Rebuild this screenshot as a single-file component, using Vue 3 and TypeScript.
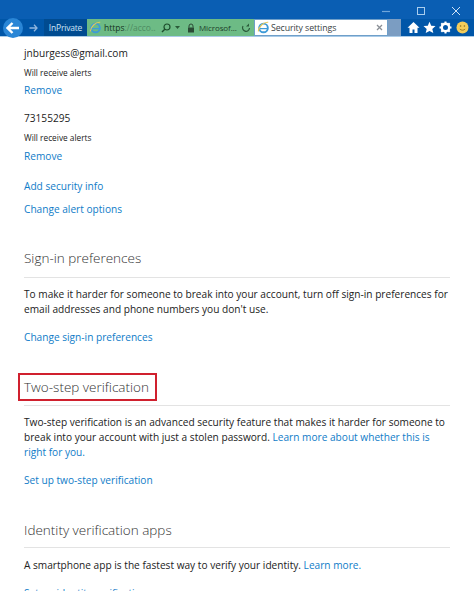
<script setup lang="ts">
</script>

<template>
  <div class="page">
    <header class="chrome">
      <div class="titlebar">
        <svg class="wc" width="10" height="10" viewBox="0 0 10 10"><path d="M1 5.5h8" stroke="#6fa6da" stroke-width="1.2" /></svg>
        <svg class="wc" width="10" height="10" viewBox="0 0 10 10"><rect x="1.5" y="1.5" width="7" height="7" fill="none" stroke="#a9cdee" stroke-width="1" /></svg>
        <svg class="wc" width="10" height="10" viewBox="0 0 10 10"><path d="M1 1l8 8M9 1l-8 8" stroke="#cfe2f5" stroke-width="1" /></svg>
      </div>
      <div class="toolbar">
        <div class="back">
          <svg width="14" height="12" viewBox="0 0 14 12"><path d="M6.5 1L1.5 6l5 5M2 6h11" fill="none" stroke="#fff" stroke-width="2.4" /></svg>
        </div>
        <svg class="fwd" width="9" height="8" viewBox="0 0 9 8"><path d="M5 .8L8 4 5 7.2M8 4H.5" fill="none" stroke="#8fb6de" stroke-width="1.3" /></svg>
        <div class="inprivate">InPrivate</div>
        <div class="address">
          <svg class="ie" width="13" height="13" viewBox="0 0 15 15"><circle cx="7.5" cy="8" r="5" fill="none" stroke="#3e9bd8" stroke-width="2.2" /><path d="M3 8.8h9" stroke="#3e9bd8" stroke-width="1.4" /><path d="M1.5 12C2 6 8 1 13 1.5" fill="none" stroke="#e3c75a" stroke-width="1.2" /></svg>
          <span class="url">https<span class="dim">://acco...</span></span>
          <svg class="mag" width="10" height="10" viewBox="0 0 10 10"><circle cx="6" cy="4" r="3" fill="none" stroke="#1d4d2c" stroke-width="1.2" /><path d="M3.8 6.2L1 9" stroke="#1d4d2c" stroke-width="1.4" /></svg>
          <svg class="caret" width="5" height="3" viewBox="0 0 5 3"><path d="M0 0h5L2.5 3z" fill="#2a5a38" /></svg>
          <svg class="lock" width="8" height="10" viewBox="0 0 8 10"><path d="M2 4.5V3a2 2 0 014 0v1.5" fill="none" stroke="#2b4a35" stroke-width="1" /><rect x="1" y="4.5" width="6" height="5" fill="#2b4a35" /></svg>
          <span class="site">Microsof...</span>
          <svg class="refresh" width="10" height="10" viewBox="0 0 10 10"><path d="M8.5 5A3.5 3.5 0 112 3" fill="none" stroke="#2b5a3a" stroke-width="1.2" /><path d="M8 0.5v3H5z" fill="#2b5a3a" /></svg>
        </div>
        <div class="tab">
          <svg class="ie" width="13" height="13" viewBox="0 0 15 15"><circle cx="7.5" cy="8" r="5" fill="none" stroke="#3e9bd8" stroke-width="2.2" /><path d="M3 8.8h9" stroke="#3e9bd8" stroke-width="1.4" /><path d="M1.5 12C2 6 8 1 13 1.5" fill="none" stroke="#e9c95a" stroke-width="1.3" /></svg>
          <span class="tabtitle">Security settings</span>
          <svg class="tabx" width="7" height="7" viewBox="0 0 7 7"><path d="M1 1l5 5M6 1L1 6" stroke="#8a8f96" stroke-width="1.3" /></svg>
        </div>
        <div class="newtab"></div>
        <div class="tools">
          <svg width="13" height="13" viewBox="0 0 13 13"><path d="M6.5 1L0.5 6.8h2V12h3V8.5h2V12h3V6.8h2z" fill="#fff" /></svg>
          <svg width="13" height="13" viewBox="0 0 13 13"><path d="M6.5 .8l1.7 3.9 4.3.4-3.2 2.8 1 4.2-3.8-2.2-3.8 2.2 1-4.2L.5 5.1l4.3-.4z" fill="#fff" /></svg>
          <svg width="13" height="13" viewBox="0 0 13 13"><circle cx="6.5" cy="6.5" r="3.7" fill="none" stroke="#fff" stroke-width="2.4" /><path d="M6.5 .5v2.4M6.5 10v2.5M.5 6.5h2.4M10 6.5h2.5M2.3 2.3L4 4M9 9l1.7 1.7M10.7 2.3L9 4M4 9l-1.7 1.7" stroke="#fff" stroke-width="2" /></svg>
          <svg width="13" height="13" viewBox="0 0 13 13"><circle cx="6.5" cy="6.5" r="6" fill="#f3cd5b" /><circle cx="4.6" cy="5" r=".8" fill="#8a6d1c" /><circle cx="8.4" cy="5" r=".8" fill="#8a6d1c" /><path d="M3.8 8c1.4 1.6 4 1.6 5.4 0" fill="none" stroke="#8a6d1c" stroke-width=".8" /></svg>
        </div>
      </div>
    </header>

    <main class="content">
      <section class="contact first">
        <div class="value">jnburgess@gmail.com</div>
        <div class="note">Will receive alerts</div>
        <a class="link">Remove</a>
      </section>
      <section class="contact second">
        <div class="value">73155295</div>
        <div class="note">Will receive alerts</div>
        <a class="link">Remove</a>
      </section>
      <a class="link add">Add security info</a>
      <a class="link change">Change alert options</a>

      <h2 class="heading signin">Sign-in preferences</h2>
      <p class="para">To make it harder for someone to break into your account, turn off sign-in preferences for email addresses and phone numbers you don't use.</p>
      <a class="link after">Change sign-in preferences</a>

      <h2 class="heading twostep"><span class="mark">Two-step verification</span></h2>
      <p class="para">Two-step verification is an advanced security feature that makes it harder for someone to break into your account with just a stolen password. <a class="inline">Learn more about whether this is right for you.</a></p>
      <a class="link after">Set up two-step verification</a>

      <h2 class="heading identity">Identity verification apps</h2>
      <p class="para wide">A smartphone app is the fastest way to verify your identity. <a class="inline">Learn more.</a></p>
      <a class="link after">Set up identity verification app</a>
    </main>
  </div>
</template>

<style>
html, body { margin: 0; background: #fff; overflow: hidden; }
</style>

<style scoped>
.page { width: 474px; height: 591px; overflow: hidden; font-family: "Open Sans", "Noto Sans", sans-serif; color: #222; }
.chrome { height: 37px; background: #0a5eb3; border-bottom: 1px solid #a9cbe8; box-sizing: border-box; }
.titlebar { height: 19px; display: flex; justify-content: flex-end; align-items: center; gap: 25px; padding: 3px 13px 0 0; box-sizing: border-box; }
.toolbar { height: 17px; background: #0056a8; display: flex; align-items: center; }
.back { width: 20px; height: 20px; margin: 0 0 0 3px; border-radius: 50%; background: #2a86d6; display: flex; align-items: center; justify-content: center; flex: none; }
.fwd { margin-left: 6px; flex: none; }
.inprivate { margin-left: 6px; width: 43px; height: 17px; background: #004b90; color: #cfe4f7; font-size: 8.5px; line-height: 17px; text-align: center; flex: none; letter-spacing: -.2px; }
.address { width: 167px; height: 17px; background: #6dbb85; display: flex; align-items: center; flex: none; font-size: 8.5px; color: #16351f; }
.ie { flex: none; margin-left: 2px; }
.url { margin-left: 2px; width: 52px; white-space: nowrap; overflow: hidden; flex: none; }
.dim { color: #4d8c62; }
.mag { margin-left: 5px; flex: none; }
.caret { margin-left: 4px; flex: none; }
.lock { margin-left: 7px; flex: none; }
.site { margin-left: 4px; width: 40px; font-size: 8px; letter-spacing: -.1px; white-space: nowrap; color: #20402b; flex: none; }
.refresh { margin-left: 2px; flex: none; }
.tab { width: 134px; height: 17px; background: #fff; display: flex; align-items: center; border: 1px solid #6f9fc9; box-sizing: border-box; flex: none; }
.tabtitle { margin-left: 1px; font-size: 8.8px; color: #3a3f45; flex: 1; white-space: nowrap; letter-spacing: -.1px; }
.tabx { margin-right: 4px; flex: none; }
.newtab { width: 13px; height: 17px; background: #7b9dc2; flex: none; }
.tools { display: flex; gap: 3.2px; margin-left: 6px; align-items: center; }

.content { padding: 0 24px; font-size: 10.15px; line-height: 15px; }
.content a { display: block; color: #0f7cc8; }
.content a.inline { display: inline; }
.note { font-size: 8.3px; margin-top: 4px; }
.first { padding-top: 9px; }
.second { padding-top: 13px; }
.second .link { margin-top: 4px; }
.first .link { margin-top: 3px; }
.link.add { margin-top: 15px; }
.link.change { margin-top: 8px; }
.heading { margin: 0; font-size: 13.5px; line-height: 20px; font-weight: 300; color: #333; border-bottom: 1px solid #e3e3e3; padding-bottom: 9px; }
.heading.signin { margin-top: 31px; }
.heading.twostep { margin-top: 32px; padding-bottom: 8px; }
.heading.identity { margin-top: 32px; padding-bottom: 7px; }
.para { margin: 9px 0 0; }
.para.wide { margin-top: 10px; }
.link.after { margin-top: 13px; }
.mark { position: relative; display: inline-block; }
.mark::after { content: ""; position: absolute; left: -6px; right: -8px; top: -4px; bottom: -4px; border: 2px solid #d0202e; }
</style>
